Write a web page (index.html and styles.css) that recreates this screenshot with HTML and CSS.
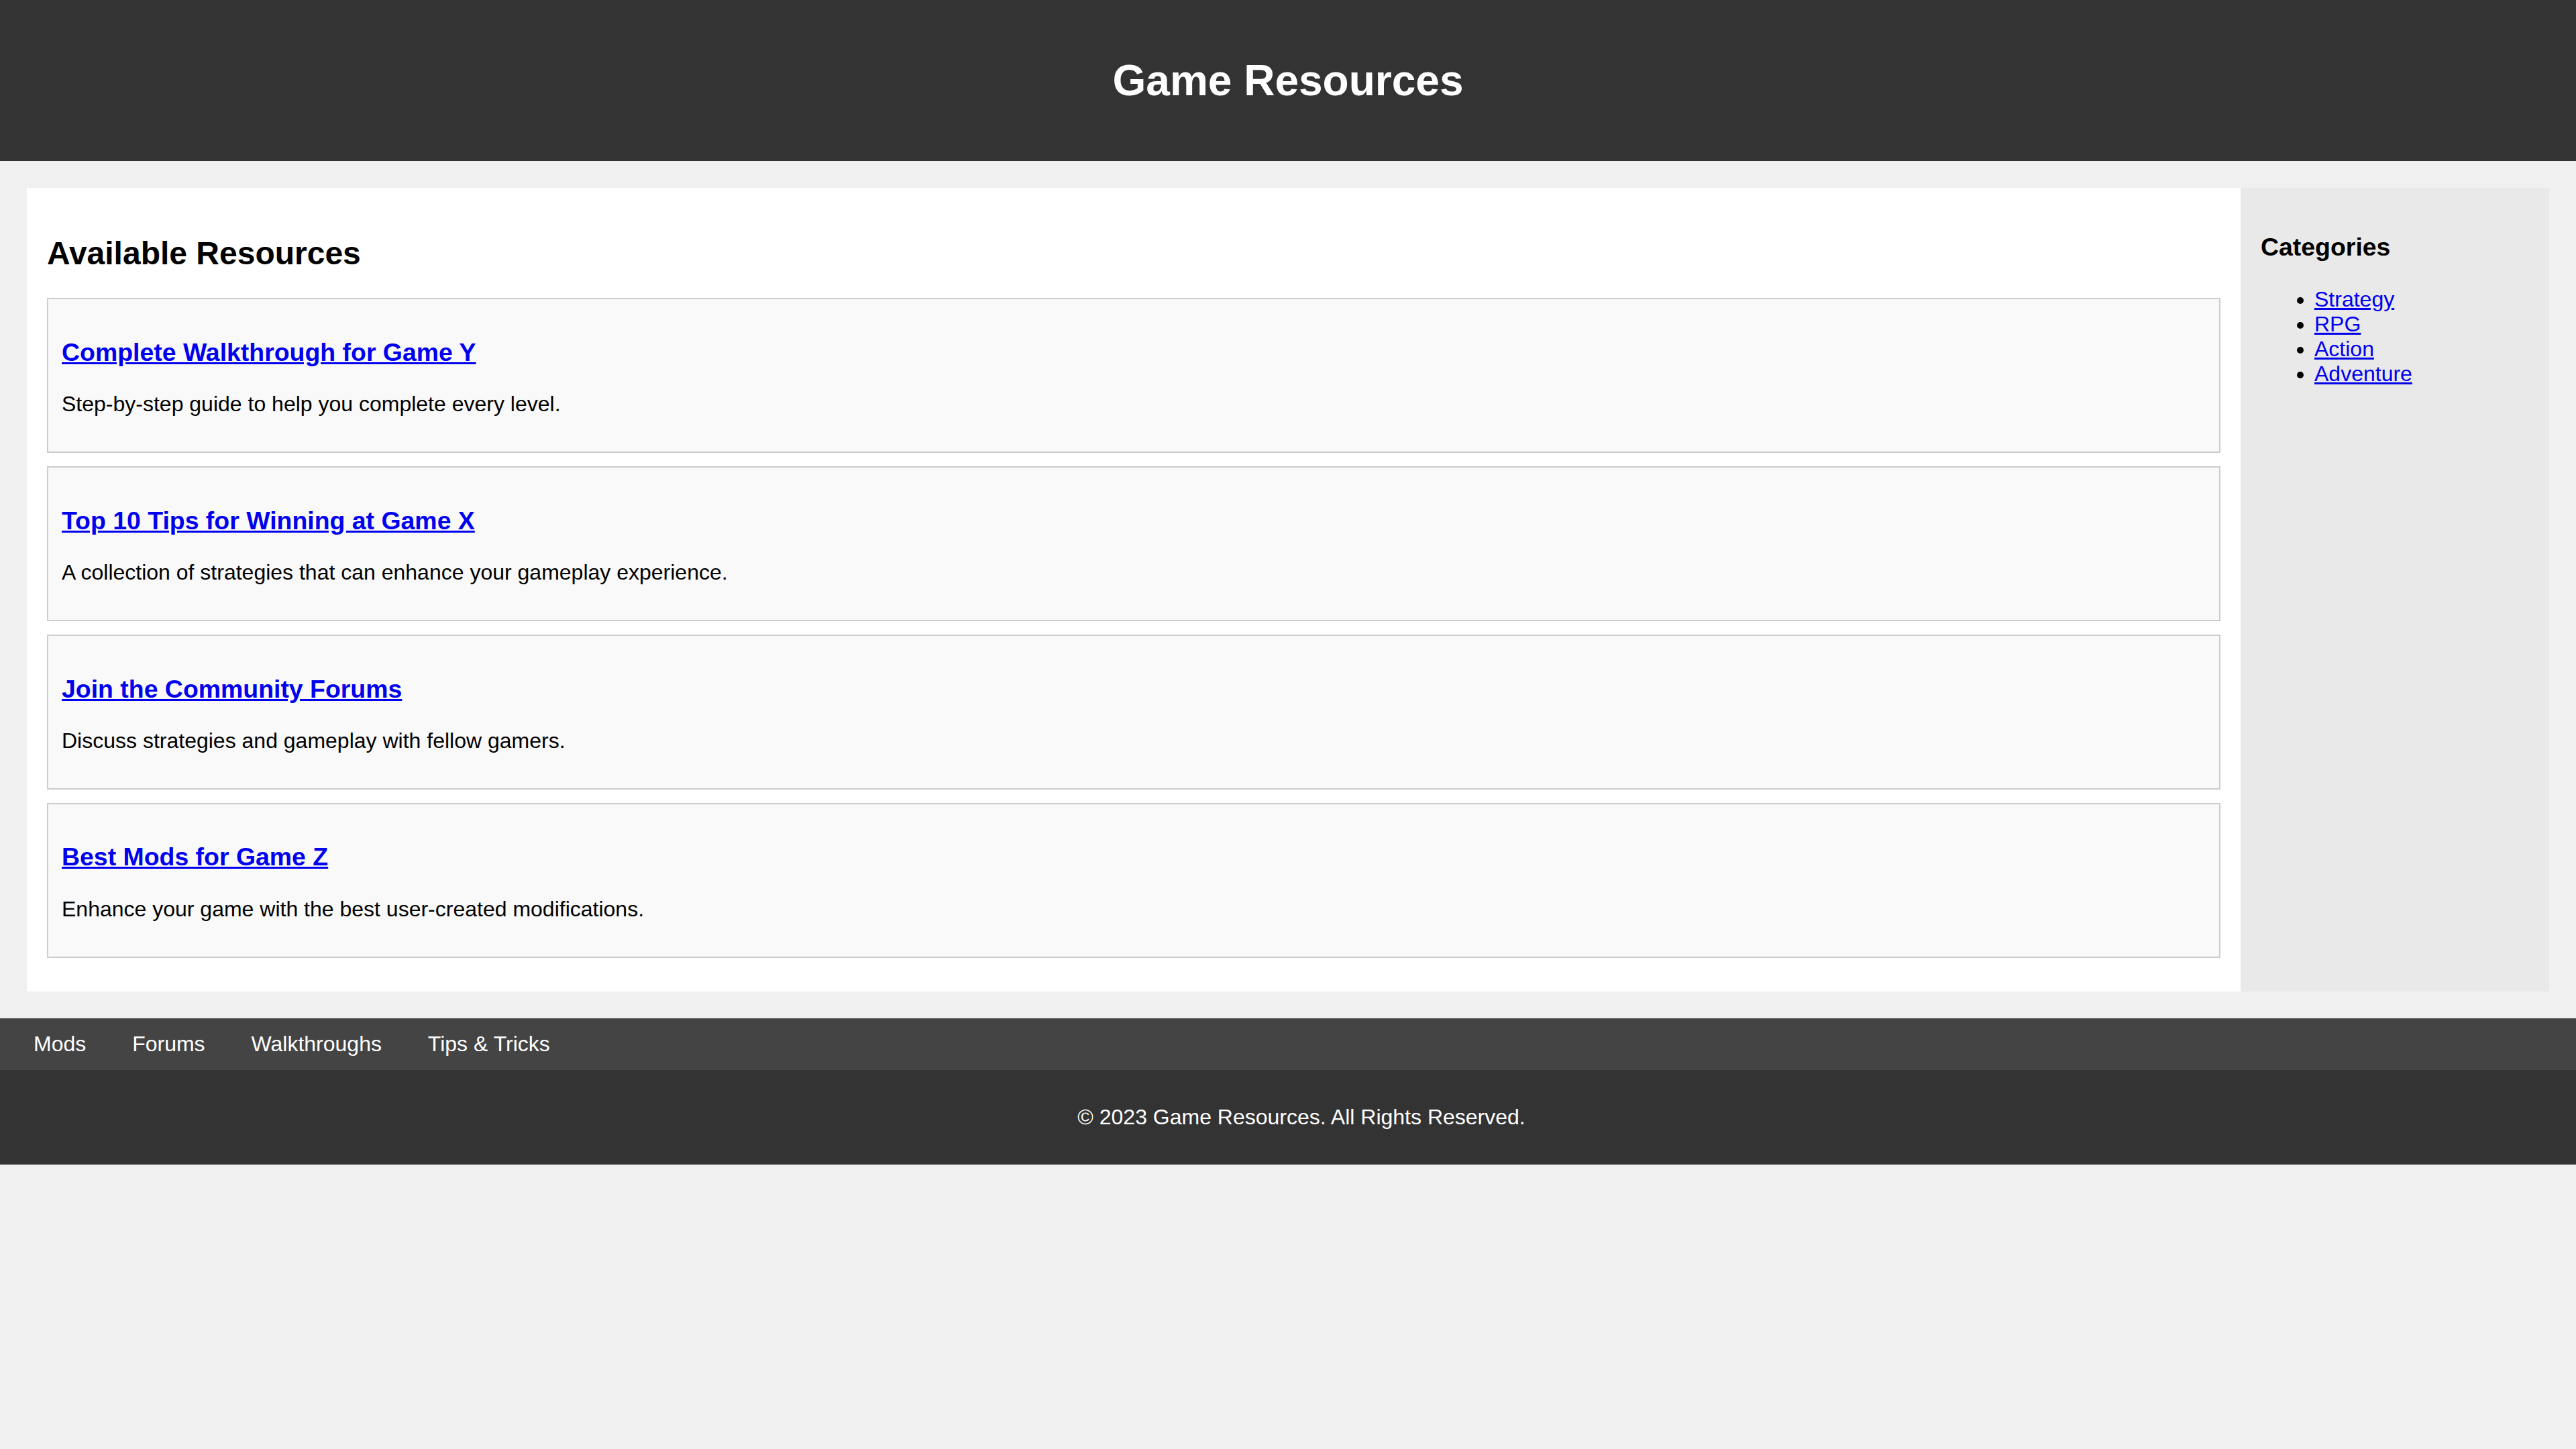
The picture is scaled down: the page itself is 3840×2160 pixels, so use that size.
FILE: index.html
```html
<!DOCTYPE html>
<html lang="en">
<head>
<meta charset="utf-8">
<title>Game Resources</title>
<link rel="stylesheet" href="styles.css">
</head>
<body>
<header class="site-header">
  <h1 class="site-title">Game Resources</h1>
</header>
<div class="container">
  <main class="main">
    <h2 class="section-title">Available Resources</h2>
    <div class="card">
      <h3 class="card-title"><a href="#">Complete Walkthrough for Game Y</a></h3>
      <p class="card-text">Step-by-step guide to help you complete every level.</p>
    </div>
    <div class="card">
      <h3 class="card-title"><a href="#">Top 10 Tips for Winning at Game X</a></h3>
      <p class="card-text">A collection of strategies that can enhance your gameplay experience.</p>
    </div>
    <div class="card">
      <h3 class="card-title"><a href="#">Join the Community Forums</a></h3>
      <p class="card-text">Discuss strategies and gameplay with fellow gamers.</p>
    </div>
    <div class="card">
      <h3 class="card-title"><a href="#">Best Mods for Game Z</a></h3>
      <p class="card-text">Enhance your game with the best user-created modifications.</p>
    </div>
  </main>
  <aside class="sidebar">
    <h3 class="sidebar-title">Categories</h3>
    <ul class="cat-list">
      <li><a href="#">Strategy</a></li>
      <li><a href="#">RPG</a></li>
      <li><a href="#">Action</a></li>
      <li><a href="#">Adventure</a></li>
    </ul>
  </aside>
</div>
<nav class="bottom-nav">
  <a class="nav-link" href="#">Mods</a>
  <a class="nav-link" href="#">Forums</a>
  <a class="nav-link" href="#">Walkthroughs</a>
  <a class="nav-link" href="#">Tips &amp; Tricks</a>
</nav>
<footer class="site-footer">
  <p class="copy">&copy; 2023 Game Resources. All Rights Reserved.</p>
</footer>
</body>
</html>
```
FILE: styles.css
```css
html, body {
  margin: 0;
  padding: 0;
}
body {
  background: #f0f0f0;
  font-family: "Liberation Sans", Arial, Helvetica, sans-serif;
  font-size: 32px;
  color: #000;
}
.site-header {
  background: #333;
  color: #fff;
  text-align: center;
  padding: 40px;
}
.site-title {
  font-size: 64px;
  font-weight: bold;
  margin: 42.88px 0;
}
.container {
  display: flex;
  margin: 40px;
}
.main {
  flex: 1;
  background: #fff;
  padding: 30px;
}
.section-title {
  font-size: 48px;
  font-weight: bold;
  margin: 39.84px 0;
}
.card {
  background: #f9f9f9;
  border: 2px solid #ccc;
  padding: 20px;
  margin-bottom: 20px;
}
.card-title {
  font-size: 37.44px;
  font-weight: bold;
  margin: 37.44px 0;
}
.card-title a,
.cat-list a {
  color: #0000ee;
  text-decoration: underline;
}
.card-text {
  margin: 32px 0;
}
.sidebar {
  width: 400px;
  padding: 30px;
  background: #e9e9e9;
}
.sidebar-title {
  font-size: 37.44px;
  font-weight: bold;
  margin: 37.44px 0;
}
.cat-list {
  margin: 32px 0;
  padding-left: 80px;
}
.bottom-nav {
  background: #444;
  padding: 20px;
}
.nav-link {
  color: #fff;
  text-decoration: none;
  padding: 0 30px;
}
.site-footer {
  background: #333;
  color: #fff;
  text-align: center;
  padding: 20px 0 20px 40px;
}
.copy {
  margin: 32px 0;
}
```
